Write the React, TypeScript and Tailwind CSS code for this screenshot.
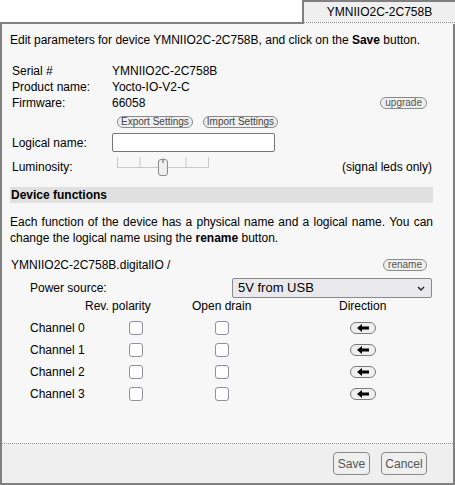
import React from "react";

const font = { fontFamily: '"Liberation Sans", Arial, sans-serif' };

function Pill({ children, className = "" }: { children: React.ReactNode; className?: string }) {
  return (
    <span
      className={`inline-flex items-center justify-center h-[12px] rounded-full border border-[#8a8a8a] bg-[#efefef] text-[10px] leading-none text-[#444] px-[3px] ${className}`}
    >
      {children}
    </span>
  );
}

function Checkbox() {
  return <span className="block w-[14px] h-[14px] rounded-[3px] border border-[#8f8f9d] bg-white" />;
}

function DirButton() {
  return (
    <span className="flex items-center justify-center w-[26px] h-[12px] rounded-full border border-[#7a7a7a] bg-[#efefef]">
      <svg width="12" height="8" viewBox="0 0 12 8">
        <path d="M0 4 L5 0 L5 2.5 L12 2.5 L12 5.5 L5 5.5 L5 8 Z" fill="#000" />
      </svg>
    </span>
  );
}

function Slider() {
  const ticks = [0.5, 23, 46, 69, 91.5];
  return (
    <svg width="95" height="20" viewBox="0 0 95 20" className="block">
      <line x1="0" y1="10.5" x2="92" y2="10.5" stroke="#c8c8c8" strokeWidth="1" />
      {ticks.map((x) => (
        <line key={x} x1={x} y1="0" x2={x} y2="10.5" stroke="#c8c8c8" strokeWidth="1" />
      ))}
      <rect x="41.5" y="2.5" width="9" height="16" rx="2.5" fill="#efefef" stroke="#8a8a8a" />
      <line x1="46" y1="3" x2="46" y2="6" stroke="#555" strokeWidth="1" />
    </svg>
  );
}

export default function App() {
  const channels = ["Channel 0", "Channel 1", "Channel 2", "Channel 3"];
  return (
    <div className="w-[455px] h-[485px] bg-white flex flex-col text-[12px] text-black" style={font}>
      {/* tab row */}
      <div className="flex items-start">
        <div className="w-[302px] h-[24px] border-b-2 border-[#808080]" />
        <div className="flex-1 h-[24px] border-l-2 border-t-2 border-[#808080] bg-[#efefef] flex items-start justify-center">
          <div className="w-full h-[21px] border-b border-dotted border-[#999] flex items-center justify-center text-[12px]">
            YMNIIO2C-2C758B
          </div>
        </div>
      </div>

      {/* panel */}
      <div className="flex-1 flex flex-col border-l-2 border-r-2 border-b-2 border-[#808080] bg-[#f7f7f7]">
        <div className="flex-1 pl-2 pr-5">
          <div className="mt-2 h-4 leading-4">
            Edit parameters for device YMNIIO2C-2C758B, and click on the <b>Save</b> button.
          </div>

          <div className="mt-[15px] pl-[2px]">
            <div className="flex h-4 leading-4">
              <span className="w-[100px]">Serial #</span>
              <span>YMNIIO2C-2C758B</span>
            </div>
            <div className="flex h-4 leading-4">
              <span className="w-[100px]">Product name:</span>
              <span>Yocto-IO-V2-C</span>
            </div>
            <div className="flex h-4 leading-4 items-center">
              <span className="w-[100px]">Firmware:</span>
              <span>66058</span>
              <Pill className="ml-auto mr-[6px] px-[4px] text-[#555]">upgrade</Pill>
            </div>
          </div>

          <div className="mt-[5px] h-[12px] pl-[107px] flex gap-[10px]">
            <Pill className="px-[2px]">Export Settings</Pill>
            <Pill className="px-[2px]">Import Settings</Pill>
          </div>

          <div className="mt-[5px] flex items-center h-[19px]">
            <span className="w-[102px] pl-[2px]">Logical name:</span>
            <div className="w-[163px] h-[19px] rounded-[2px] border border-[#767676] bg-white" />
          </div>

          <div className="mt-[5px] flex items-center h-[20px]">
            <span className="w-[107px] pl-[2px]">Luminosity:</span>
            <Slider />
            <span className="ml-auto mr-[1px]">(signal leds only)</span>
          </div>

          <div className="mt-[10px] h-4 leading-4 bg-[#e0e0e0] px-[1px] font-bold">Device functions</div>

          <div className="mt-[11px] leading-4">
            <div className="text-justify [text-align-last:justify]">
              Each function of the device has a physical name and a logical name. You can
            </div>
            <div>
              change the logical name using the <span className="font-bold">rename</span> button.
            </div>
          </div>

          <div className="mt-[11px] flex items-center h-4 leading-4 pl-[1px]">
            <span>YMNIIO2C-2C758B.digitalIO /</span>
            <Pill className="ml-auto mr-[6px] px-[4px] text-[#555]">rename</Pill>
          </div>

          <div className="mt-[5px] flex items-center h-[20px] pl-[20px]">
            <span className="w-[202px]">Power source:</span>
            <div className="w-[200px] h-[20px] rounded-[2px] border border-[#8a8a8a] bg-[#e9e9ed] flex items-center pl-[5px] pr-[6px] text-[13px]">
              <span>5V from USB</span>
              <svg className="ml-auto" width="8" height="5" viewBox="0 0 8 5">
                <path d="M1 1 L4 4 L7 1" fill="none" stroke="#222" strokeWidth="1.4" />
              </svg>
            </div>
          </div>

          <div className="flex h-4 leading-4 pl-[75px]">
            <span className="w-[107px]">Rev. polarity</span>
            <span className="w-[147px]">Open drain</span>
            <span>Direction</span>
          </div>

          <div className="mt-[3px]">
            {channels.map((c) => (
              <div key={c} className="flex items-center h-[22px]">
                <span className="w-[119px] pl-[20px]">{c}</span>
                <Checkbox />
                <span className="w-[72px]" />
                <Checkbox />
                <span className="w-[121px]" />
                <DirButton />
              </div>
            ))}
          </div>
        </div>

        <div className="h-[40px] border-t border-dotted border-[#999] bg-[#efefef] flex items-center justify-end gap-[11px] pr-[26px]">
          <span className="w-[37px] h-[23px] rounded-[4px] border border-[#8a8a8a] bg-[#efefef] text-[#555] text-[12px] flex items-center justify-center">
            Save
          </span>
          <span className="w-[46px] h-[23px] rounded-[4px] border border-[#8a8a8a] bg-[#efefef] text-[#555] text-[12px] flex items-center justify-center">
            Cancel
          </span>
        </div>
      </div>
    </div>
  );
}
